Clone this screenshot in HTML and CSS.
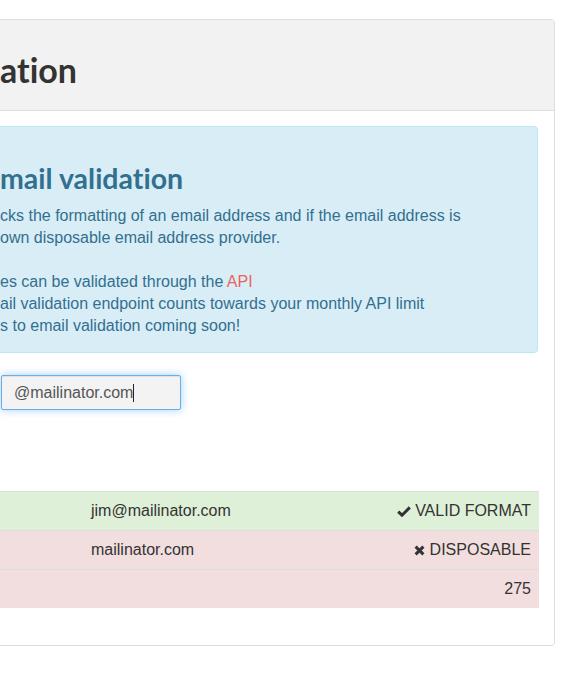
FILE: index.html
```html
<!DOCTYPE html>
<html lang="en">
<head>
<meta charset="utf-8">
<title>Email validation</title>
<link rel="stylesheet" href="styles.css">
</head>
<body>
<div class="page">
  <div class="panel">
    <div class="panel-heading">
      <h1 class="panel-title">ation</h1>
    </div>
    <div class="panel-body">
      <div class="alert">
        <h2 class="alert-title">mail validation</h2>
        <p class="alert-text">cks the formatting of an email address and if the email address is<br>own disposable email address provider.<br><br>es can be validated through the <a class="link" href="#">API</a><br>ail validation endpoint counts towards your monthly API limit<br>s to email validation coming soon!</p>
      </div>
      <div class="form-row">
        <div class="input">@mailinator.com<span class="caret"></span></div>
      </div>
      <table class="results">
        <colgroup><col class="col-a"><col class="col-b"><col class="col-c"></colgroup>
        <tbody>
          <tr class="success">
            <td></td>
            <td>jim@mailinator.com</td>
            <td class="right"><svg class="icon" width="14" height="11" viewBox="0 0 14 11"><path d="M1.2 5.6 L5 9.2 L12.8 1.4" fill="none" stroke="#333" stroke-width="3"/></svg> VALID FORMAT</td>
          </tr>
          <tr class="danger">
            <td></td>
            <td>mailinator.com</td>
            <td class="right"><svg class="icon" width="11" height="11" viewBox="0 0 11 11"><path d="M1.6 1.6 L9.4 9.4 M9.4 1.6 L1.6 9.4" fill="none" stroke="#333" stroke-width="3"/></svg> DISPOSABLE</td>
          </tr>
          <tr class="danger">
            <td></td>
            <td></td>
            <td class="right">275</td>
          </tr>
        </tbody>
      </table>
    </div>
  </div>
</div>
</body>
</html>
```

FILE: styles.css
```css
html, body {
  margin: 0;
  padding: 0;
  background: #fff;
  overflow: hidden;
}

body {
  font-family: "Liberation Sans", Arial, sans-serif;
  font-size: 16px;
  line-height: 22px;
  color: #333;
}

.page {
  padding-top: 19px;
}

.panel {
  margin: 0 23px 0 -32px;
  border: 1px solid #ddd;
  border-radius: 4px;
  background: #fff;
}

.panel-heading {
  background: #f2f2f2;
  border-bottom: 1px solid #ddd;
  border-radius: 3px 3px 0 0;
  height: 90px;
  padding: 0 15px 0 31px;
  display: flex;
  align-items: center;
}

.panel-title {
  margin: 0;
  padding-top: 9px;
  font-family: Lato, "Open Sans", sans-serif;
  font-weight: 700;
  font-size: 34px;
  line-height: 1.1;
  color: #333;
  font-variant-ligatures: none;
}

.panel-body {
  padding: 15px;
}

.alert {
  background: #d9edf7;
  border: 1px solid #bce8f1;
  border-radius: 4px;
  padding: 15px;
  color: #31708f;
  margin-right: 1px;
  margin-bottom: 22px;
}

.alert-title {
  margin: 20px 0 10px;
  font-family: Lato, "Open Sans", sans-serif;
  font-weight: 700;
  font-size: 28.5px;
  line-height: 33px;
  color: #31708f;
  font-variant-ligatures: none;
}

.alert-text {
  margin: 0;
}

.link {
  color: #e9645c;
  text-decoration: none;
}

.form-row {
  display: flex;
  padding-left: 17px;
}

.input {
  box-sizing: border-box;
  width: 180px;
  height: 35px;
  padding: 6px 12px;
  border: 1px solid #66afe9;
  border-radius: 2px;
  background: #f3f3f3;
  color: #555;
  box-shadow: inset 0 1px 1px rgba(0, 0, 0, 0.075), 0 0 8px rgba(102, 175, 233, 0.6);
  display: flex;
  align-items: center;
}

.caret {
  display: inline-block;
  width: 1px;
  height: 18px;
  background: #222;
}

.results {
  width: 100%;
  margin-top: 81px;
  margin-bottom: 22px;
  border-collapse: collapse;
  table-layout: fixed;
}

.col-a { width: 99px; }
.col-c { width: 200px; }

.results td {
  padding: 8px;
  border-top: 1px solid #ddd;
  line-height: 22px;
  vertical-align: top;
  white-space: nowrap;
}

.results .right {
  text-align: right;
}

.success td {
  background: #dff0d8;
}

.danger td {
  background: #f2dede;
}

.icon {
  display: inline-block;
  vertical-align: -1px;
}
```
